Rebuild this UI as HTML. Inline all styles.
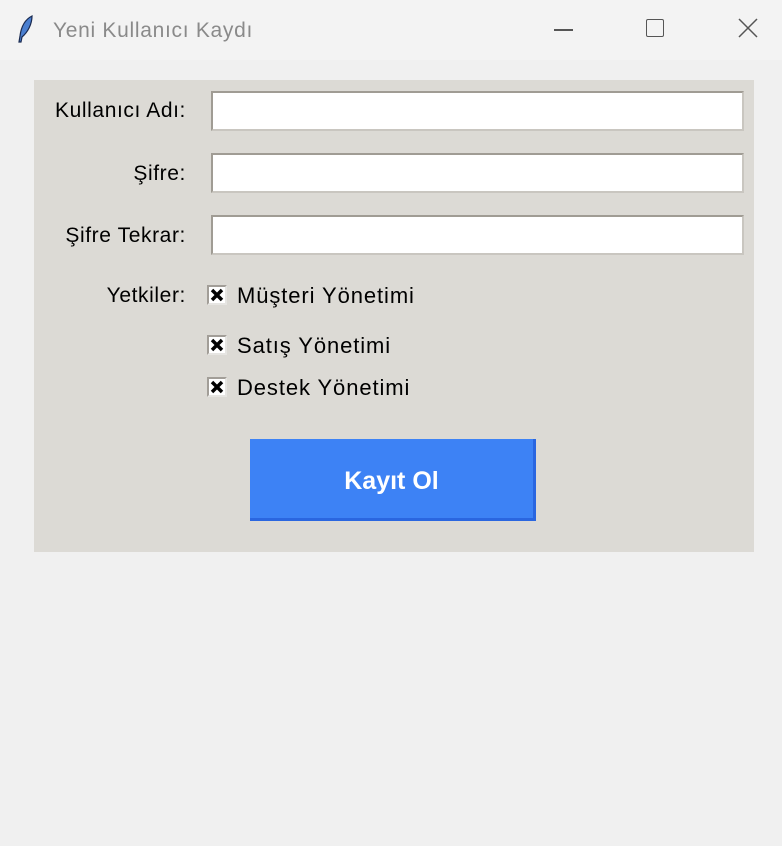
<!DOCTYPE html>
<html><head><style>
body{margin:0;width:782px;height:846px;background:#f0f0f0;font-family:"Liberation Sans","DejaVu Sans",sans-serif;position:relative;overflow:hidden}
.t{position:absolute;white-space:nowrap}
#tb{position:absolute;left:0;top:0;width:782px;height:60px;background:#f3f3f3}
#panel{position:absolute;left:34px;top:80px;width:720px;height:472px;background:#dcdad5}
.lbl{font-size:21px;letter-spacing:0.6px;color:#000;text-align:right;width:180px;left:6px}
.e{position:absolute;left:211px;width:529px;height:36px;background:#fff;border:2px solid #a09c94;border-right-color:#c9c6c0;border-bottom-color:#c9c6c0}
.cb{position:absolute;left:207px;width:16px;height:16px;background:#fff;border:2px solid #a29e98;border-right-color:#e6e5e2;border-bottom-color:#e6e5e2}
.cb svg{position:absolute;left:1px;top:1px}
.cl{font-size:22px;letter-spacing:0.9px;left:237px}
#btn{position:absolute;left:250px;top:439px;width:283px;height:79px;background:#3d82f5;border-right:3px solid #2a66e0;border-bottom:3px solid #2a66e0;color:#fff;font-weight:bold;font-size:25px;text-align:center;line-height:84px}
</style></head><body>
<div id="tb">
<svg style="position:absolute;left:16px;top:14px" width="20" height="32" viewBox="0 0 20 32"><path d="M16 2 C8 6 5 14 4 22 L3 28 L5 28 L6 23 C12 18 16 10 16 2Z" fill="#4a7fd0" stroke="#1a2a50" stroke-width="1.2"/></svg>
<div class="t" style="left:53px;top:19px;font-size:21px;letter-spacing:0.7px;color:#8a8a8a">Yeni Kullanıcı Kaydı</div>
<div style="position:absolute;left:554px;top:29px;width:19px;height:1.5px;background:#555"></div>
<div style="position:absolute;left:646px;top:19px;width:16px;height:16px;border:1.5px solid #555;border-radius:2px"></div>
<svg style="position:absolute;left:738px;top:18px" width="20" height="20"><path d="M1 1L19 19M19 1L1 19" stroke="#555" stroke-width="1.5"/></svg>
</div>
<div id="panel"></div>
<div class="t lbl" style="top:99px">Kullanıcı Adı:</div>
<div class="t lbl" style="top:162px">Şifre:</div>
<div class="t lbl" style="top:224px">Şifre Tekrar:</div>
<div class="t lbl" style="top:284px">Yetkiler:</div>
<div class="e" style="top:91px"></div>
<div class="e" style="top:153px"></div>
<div class="e" style="top:215px"></div>
<div class="cb" style="top:285px"><svg width="14" height="14"><path d="M2 2L12 12M12 2L2 12" stroke="#000" stroke-width="3.5"/></svg></div>
<div class="cb" style="top:335px"><svg width="14" height="14"><path d="M2 2L12 12M12 2L2 12" stroke="#000" stroke-width="3.5"/></svg></div>
<div class="cb" style="top:377px"><svg width="14" height="14"><path d="M2 2L12 12M12 2L2 12" stroke="#000" stroke-width="3.5"/></svg></div>
<div class="t cl" style="top:283px">Müşteri Yönetimi</div>
<div class="t cl" style="top:333px">Satış Yönetimi</div>
<div class="t cl" style="top:375px">Destek Yönetimi</div>
<div id="btn">Kayıt Ol</div>
</body></html>
